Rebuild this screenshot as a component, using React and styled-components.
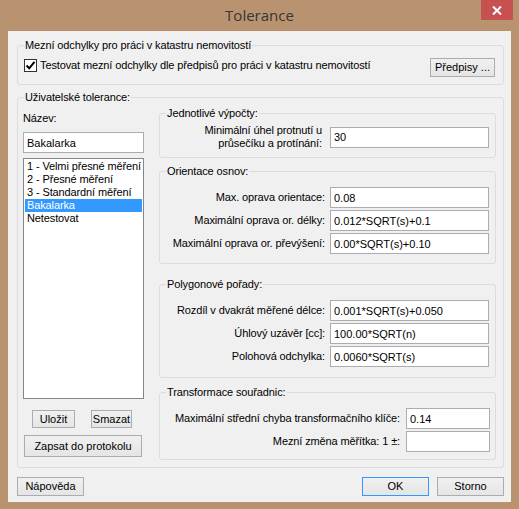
import React from 'react';
import styled, { createGlobalStyle } from 'styled-components';

const GlobalStyle = createGlobalStyle`
  html, body {
    margin: 0;
    padding: 0;
    background: #b99370;
  }
  body {
    font-family: "Liberation Sans", Arial, sans-serif;
    font-size: 11px;
    letter-spacing: -0.12px;
    color: #000;
  }
  * {
    box-sizing: border-box;
  }
`;

const Window = styled.div`
  width: 519px;
  height: 509px;
  background: #b99370;
  display: flex;
  flex-direction: column;
`;

const TitleBar = styled.div`
  height: 31px;
  display: grid;
  grid-template-columns: 1fr auto 1fr;
`;

const Title = styled.div`
  grid-column: 2;
  font-family: "Open Sans", "Noto Sans", sans-serif;
  font-size: 15px;
  letter-spacing: 0;
  line-height: 20px;
  padding-top: 5px;
  color: #363636;
`;

const CloseButton = styled.div`
  grid-column: 3;
  justify-self: end;
  width: 32px;
  height: 20px;
  margin-right: 6px;
  background: #c75050;
  display: flex;
  align-items: center;
  justify-content: center;
`;

const Client = styled.div`
  margin: 0 8px;
  height: 471px;
  background: #f0f0f0;
  padding: 8px 7px 0 9px;
  display: flex;
  flex-direction: column;
`;

const Group = styled.fieldset`
  margin: ${(p) => p.$mt || 0}px 0 0;
  padding: 0;
  border: 1px solid #dcdcdc;
  border-radius: 3px;
  height: ${(p) => p.$h}px;
  min-width: 0;
`;

const Legend = styled.legend`
  margin-left: 6px;
  padding: 0 1px;
  line-height: 13px;
`;

const TopRow = styled.div`
  display: flex;
  justify-content: space-between;
  align-items: flex-start;
  padding: 0 8px 0 6px;
`;

const CheckLabel = styled.label`
  display: flex;
  align-items: center;
  gap: 3px;
  margin-top: 7px;
  line-height: 13px;
`;

const CheckBox = styled.span`
  width: 13px;
  height: 13px;
  border: 1px solid #333;
  background: #fff;
  display: flex;
  align-items: center;
  justify-content: center;
`;

const Button = styled.button`
  font: inherit;
  color: #000;
  width: ${(p) => p.$w}px;
  height: ${(p) => p.$h || 19}px;
  margin-top: ${(p) => p.$mt || 0}px;
  margin-left: ${(p) => p.$ml || 0}px;
  padding: 0;
  border: 1px solid ${(p) => (p.$default ? '#3399ff' : '#acacac')};
  background: linear-gradient(#f0f0f0, #e5e5e5);
  line-height: 15px;
`;

const Columns = styled.div`
  display: flex;
  gap: 15px;
  padding: 0 7px 0 5px;
`;

const LeftColumn = styled.div`
  width: 121px;
  display: flex;
  flex-direction: column;
`;

const RightColumn = styled.div`
  flex: 1;
  display: flex;
  flex-direction: column;
`;

const NameLabel = styled.div`
  margin-top: 8px;
  line-height: 13px;
`;

const TextInput = styled.input`
  font: inherit;
  color: #000;
  height: 21px;
  width: 100%;
  margin-top: ${(p) => p.$mt || 0}px;
  padding: 0 3px;
  border: 1px solid #abadb3;
  background: #fff;
  outline: none;
`;

const ListBox = styled.div`
  margin-top: 5px;
  height: 241px;
  border: 1px solid #828790;
  background: #fff;
  padding: 1px;
`;

const ListItem = styled.div`
  line-height: 13px;
  padding-left: 2px;
  white-space: nowrap;
  background: ${(p) => (p.$selected ? '#3399ff' : 'transparent')};
  color: ${(p) => (p.$selected ? '#fff' : '#000')};
`;

const ButtonRow = styled.div`
  display: flex;
  gap: 16px;
  padding-left: 9px;
  margin-top: 11px;
`;

const FieldGrid = styled.div`
  display: grid;
  grid-template-columns: 1fr ${(p) => p.$input}px;
  column-gap: ${(p) => p.$gap}px;
  row-gap: 2px;
  align-items: center;
  padding: ${(p) => p.$pt}px ${(p) => p.$pr}px 0 0;
`;

const FieldLabel = styled.div`
  text-align: right;
  white-space: nowrap;
  line-height: 13px;
`;

const Footer = styled.div`
  display: flex;
  gap: 8px;
  margin-top: 9px;
  & > :first-child {
    margin-right: auto;
  }
`;

const items = [
  '1 - Velmi přesné měření',
  '2 - Přesné měření',
  '3 - Standardní měření',
  'Bakalarka',
  'Netestovat',
];

const orientace = [
  ['Max. oprava orientace:', '0.08'],
  ['Maximální oprava or. délky:', '0.012*SQRT(s)+0.1'],
  ['Maximální oprava or. převýšení:', '0.00*SQRT(s)+0.10'],
];

const polygony = [
  ['Rozdíl v dvakrát měřené délce:', '0.001*SQRT(s)+0.050'],
  ['Úhlový uzávěr [cc]:', '100.00*SQRT(n)'],
  ['Polohová odchylka:', '0.0060*SQRT(s)'],
];

const transformace = [
  ['Maximální střední chyba transformačního klíče:', '0.14'],
  ['Mezní změna měřítka: 1 ±:', ''],
];

const Fields = ({ rows, ...grid }) => (
  <FieldGrid {...grid}>
    {rows.map(([label, value]) => (
      <React.Fragment key={label}>
        <FieldLabel>{label}</FieldLabel>
        <TextInput defaultValue={value} />
      </React.Fragment>
    ))}
  </FieldGrid>
);

export default function App() {
  return (
    <>
      <GlobalStyle />
      <Window>
        <TitleBar>
          <Title>Tolerance</Title>
          <CloseButton>
            <svg width="10" height="9" viewBox="0 0 10 9">
              <path d="M1 0.5 L9 8.5 M9 0.5 L1 8.5" stroke="#fff" strokeWidth="2" />
            </svg>
          </CloseButton>
        </TitleBar>
        <Client>
          <Group $h={46}>
            <Legend>Mezní odchylky pro práci v katastru nemovitostí</Legend>
            <TopRow>
              <CheckLabel>
                <CheckBox>
                  <svg width="11" height="11" viewBox="0 0 11 11">
                    <path d="M1.5 5.5 L4.2 8.3 L9.5 1.8" stroke="#000" strokeWidth="2" fill="none" />
                  </svg>
                </CheckBox>
                Testovat mezní odchylky dle předpisů pro práci v katastru nemovitostí
              </CheckLabel>
              <Button $w={65} $mt={6}>Předpisy ...</Button>
            </TopRow>
          </Group>

          <Group $h={377} $mt={6}>
            <Legend>Uživatelské tolerance:</Legend>
            <Columns>
              <LeftColumn>
                <NameLabel>Název:</NameLabel>
                <TextInput $mt={7} defaultValue="Bakalarka" />
                <ListBox>
                  {items.map((item) => (
                    <ListItem key={item} $selected={item === 'Bakalarka'}>
                      {item}
                    </ListItem>
                  ))}
                </ListBox>
                <ButtonRow>
                  <Button $w={43} $h={18}>Uložit</Button>
                  <Button $w={41} $h={18}>Smazat</Button>
                </ButtonRow>
                <Button $w={118} $h={22} $mt={7} $ml={1}>Zapsat do protokolu</Button>
              </LeftColumn>

              <RightColumn>
                <Group $h={51} $mt={3}>
                  <Legend>Jednotlivé výpočty:</Legend>
                  <FieldGrid $input={159} $gap={8} $pt={4} $pr={6}>
                    <FieldLabel>
                      Minimální úhel protnutí u
                      <br />
                      průsečíku a protínání:
                    </FieldLabel>
                    <TextInput defaultValue="30" />
                  </FieldGrid>
                </Group>

                <Group $h={99} $mt={7}>
                  <Legend>Orientace osnov:</Legend>
                  <Fields rows={orientace} $input={159} $gap={5} $pt={9} $pr={6} />
                </Group>

                <Group $h={100} $mt={14}>
                  <Legend>Polygonové pořady:</Legend>
                  <Fields rows={polygony} $input={159} $gap={5} $pt={9} $pr={6} />
                </Group>

                <Group $h={74} $mt={8}>
                  <Legend>Transformace souřadnic:</Legend>
                  <Fields rows={transformace} $input={84} $gap={6} $pt={9} $pr={5} />
                </Group>
              </RightColumn>
            </Columns>
          </Group>

          <Footer>
            <Button $w={67}>Nápověda</Button>
            <Button $w={67} $default>OK</Button>
            <Button $w={67}>Storno</Button>
          </Footer>
        </Client>
      </Window>
    </>
  );
}
